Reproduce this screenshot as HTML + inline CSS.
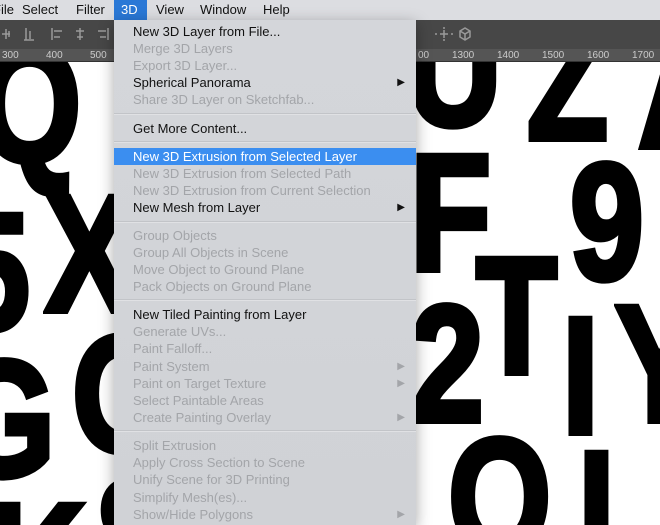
<!DOCTYPE html>
<html><head><meta charset="utf-8"><style>
*{margin:0;padding:0;box-sizing:border-box}
html,body{width:660px;height:525px;overflow:hidden}
body{position:relative;background:#fff;font-family:"Liberation Sans",sans-serif}
#cv{position:absolute;left:0;top:0;width:660px;height:525px;overflow:hidden}
#bar{position:absolute;left:0;top:0;width:660px;height:20px;background:#dcdde1;font-size:13px;color:#111}
#bar span{position:absolute;top:2px}
#tb{position:absolute;left:0;top:20px;width:660px;height:29px;background:#474747}
#ru{position:absolute;left:0;top:49px;width:660px;height:13px;background:#555;color:#ccc;font-size:10px;border-bottom:1px solid #333}
#ru span{position:absolute;top:1px}
.L{position:absolute;font-weight:bold;font-size:166px;line-height:166px;height:166px;color:#000;transform:scaleX(0.8);transform-origin:0 0;white-space:nowrap;-webkit-text-stroke:6px #000}
#menu{position:absolute;left:114px;top:20px;width:302px;height:505px;background:linear-gradient(180deg,#d4d6da,#d2d4d8 50%,#d0d2d6);box-shadow:0 4px 14px rgba(0,0,0,.35);font-size:13px}
.it{position:absolute;left:0;width:302px;height:17px;line-height:17px;padding-left:19px;color:#111;white-space:nowrap}
.d{color:#a3a5a9}
.hl{background:#3b8ef0;color:#fff}
.ar{position:absolute;right:11px;top:0;font-size:10px}
.sep{position:absolute;left:0;width:302px;height:2px;background:#c2c4c8;border-bottom:1px solid #e0e1e4}
</style></head><body>
<div id="cv">
<div class="L" style="left:-22px;top:22px">Q</div>
<div class="L" style="left:90px;top:-52px">T</div>
<div class="L" style="left:406px;top:-14px">U</div>
<div class="L" style="left:527px;top:0px">Z</div>
<div class="L" style="left:638px;top:8px">A</div>
<div class="L" style="left:45px;top:172px">X</div>
<div class="L" style="left:-44px;top:190px">5</div>
<div class="L" style="left:410px;top:131px">F</div>
<div class="L" style="left:570px;top:140px">9</div>
<div class="L" style="left:476px;top:234px">T</div>
<div class="L" style="left:410px;top:282px">2</div>
<div class="L" style="left:562px;top:294px">I</div>
<div class="L" style="left:615px;top:282px">Y</div>
<div class="L" style="left:-48px;top:337px">G</div>
<div class="L" style="left:72px;top:312px">O</div>
<div class="L" style="left:448px;top:415px">O</div>
<div class="L" style="left:578px;top:428px">L</div>
<div class="L" style="left:-10px;top:480px">K</div>
<div class="L" style="left:95px;top:455px">S</div>
</div>

<div id="bar">
<span style="left:-7px">File</span>
<span style="left:22px">Select</span>
<span style="left:76px">Filter</span>
<span style="left:114px;top:0;height:20px;width:33px;background:#2a78d6;color:#fff;padding:2px 0 0 7px">3D</span>
<span style="left:156px">View</span>
<span style="left:200px">Window</span>
<span style="left:263px">Help</span>
</div>
<div id="tb">
<svg width="660" height="29" style="position:absolute;left:0;top:0" fill="none" stroke="#9a9a9a" stroke-width="1.5">
<path d="M2 14h8M6 9v10M9 11v6"/><path d="M26 8v12M30 11v8M24 20h10"/>
<path d="M52 8v12M54 11h8M54 17h6"/><path d="M80 8v12M76 11h8M77 17h6"/>
<path d="M108 8v12M98 11h8M100 17h6"/>
<path d="M440 14h8M444 10v8M435 14h2M451 14h2M444 7v2M444 19v2"/>
<path d="M460 11l5-3 5 3v6l-5 3-5-3zM460 11l5 3 5-3M465 14v6"/>
</svg>
</div>
<div id="ru">
<span style="left:2px">300</span><span style="left:46px">400</span><span style="left:90px">500</span>
<span style="left:418px">00</span><span style="left:452px">1300</span><span style="left:497px">1400</span><span style="left:542px">1500</span><span style="left:587px">1600</span><span style="left:632px">1700</span>
</div>

<div id="menu">
<div class="it" style="top:3px">New 3D Layer from File...</div>
<div class="it d" style="top:20px">Merge 3D Layers</div>
<div class="it d" style="top:37px">Export 3D Layer...</div>
<div class="it" style="top:54px">Spherical Panorama<span class="ar" style="color:#111">▶</span></div>
<div class="it d" style="top:71px">Share 3D Layer on Sketchfab...</div>
<div class="sep" style="top:93px"></div>
<div class="it" style="top:100px">Get More Content...</div>
<div class="sep" style="top:121px"></div>
<div class="it hl" style="top:128px">New 3D Extrusion from Selected Layer</div>
<div class="it d" style="top:145px">New 3D Extrusion from Selected Path</div>
<div class="it d" style="top:162px">New 3D Extrusion from Current Selection</div>
<div class="it" style="top:179px">New Mesh from Layer<span class="ar" style="color:#111">▶</span></div>
<div class="sep" style="top:201px"></div>
<div class="it d" style="top:207px">Group Objects</div>
<div class="it d" style="top:224px">Group All Objects in Scene</div>
<div class="it d" style="top:241px">Move Object to Ground Plane</div>
<div class="it d" style="top:258px">Pack Objects on Ground Plane</div>
<div class="sep" style="top:279px"></div>
<div class="it" style="top:286px">New Tiled Painting from Layer</div>
<div class="it d" style="top:303px">Generate UVs...</div>
<div class="it d" style="top:320px">Paint Falloff...</div>
<div class="it d" style="top:338px">Paint System<span class="ar">▶</span></div>
<div class="it d" style="top:355px">Paint on Target Texture<span class="ar">▶</span></div>
<div class="it d" style="top:372px">Select Paintable Areas</div>
<div class="it d" style="top:389px">Create Painting Overlay<span class="ar">▶</span></div>
<div class="sep" style="top:410px"></div>
<div class="it d" style="top:417px">Split Extrusion</div>
<div class="it d" style="top:434px">Apply Cross Section to Scene</div>
<div class="it d" style="top:451px">Unify Scene for 3D Printing</div>
<div class="it d" style="top:469px">Simplify Mesh(es)...</div>
<div class="it d" style="top:486px">Show/Hide Polygons<span class="ar">▶</span></div>
</div>
</body></html>
